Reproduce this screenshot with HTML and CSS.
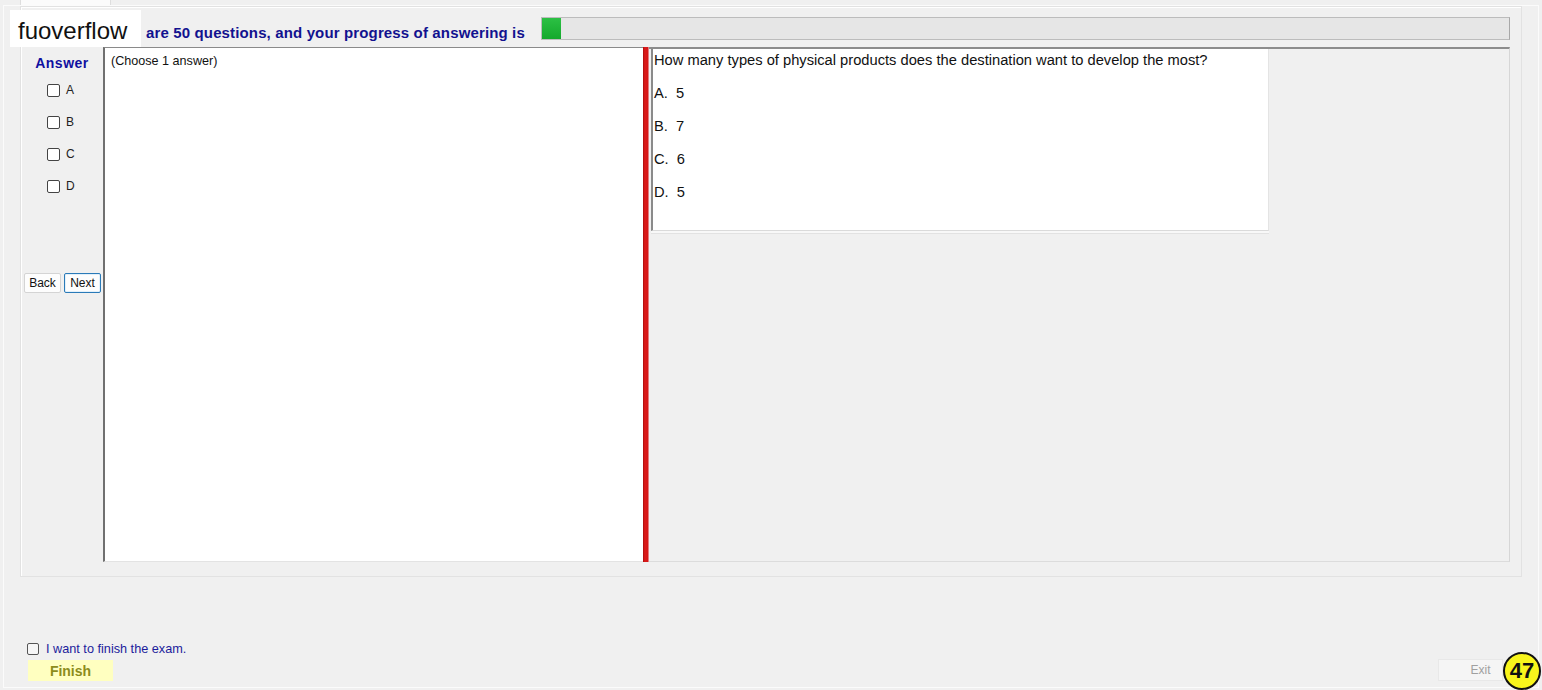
FILE: index.html
```html
<!DOCTYPE html>
<html lang="en">
<head>
  <meta charset="UTF-8" />
  <title>Exam</title>
  <link rel="stylesheet" href="styles.css">
</head>
<body>
  <div class="tabs"><div class="tab"></div></div>

  <div class="frame">
    <div class="group">
      <div class="head">
        <div class="head-text">are 50 questions, and your progress of answering is</div>
        <div class="progress"><div class="progress-fill" style="width:19px"></div></div>
      </div>

      <div class="content">
        <div class="left">
          <div class="answer-title">Answer</div>
          <label class="opt"><span class="box"></span>A</label>
          <label class="opt"><span class="box"></span>B</label>
          <label class="opt"><span class="box"></span>C</label>
          <label class="opt"><span class="box"></span>D</label>
          <div class="nav">
            <button class="btn">Back</button>
            <button class="btn btn-focus">Next</button>
          </div>
        </div>

        <div class="center">(Choose 1 answer)</div>

        <div class="splitter"></div>

        <div class="right">
          <div class="question">
            <p>How many types of physical products does the destination want to develop the most?</p>
            <p>A.&nbsp; 5</p>
            <p>B.&nbsp; 7</p>
            <p>C.&nbsp; 6</p>
            <p>D.&nbsp; 5</p>
          </div>
        </div>
      </div>
    </div>

    <div class="footer">
      <div class="finish-part">
        <label class="confirm"><span class="box"></span>I want to finish the exam.</label>
        <button class="finish">Finish</button>
      </div>
      <button class="exit">Exit</button>
    </div>
  </div>

  <!-- watermark and counter lie over the form -->
  <div class="brand">fuoverflow</div>
  <div class="badge">47</div>
</body>
</html>
```

FILE: styles.css
```css
* { box-sizing: border-box; }
body {
  margin: 0;
  width: 1542px;
  height: 690px;
  overflow: hidden;
  position: relative;
  background: #f0f0f0;
  font-family: 'Liberation Sans', Arial, sans-serif;
  color: #111;
}
.tabs { height: 5px; }
.tab {
  margin-left: 20px;
  width: 91px;
  height: 5px;
  background: #fbfbfb;
  border-left: 1px solid #dedede;
  border-right: 1px solid #dedede;
}
.frame {
  margin-left: 3px;
  width: 1536px;
  height: 683px;
  border: 1px solid #fbfbfb;
  padding: 0 16px;
  display: flex;
  flex-direction: column;
}
.group {
  height: 571px;
  border: 1px solid #e2e2e2;
  box-shadow: inset 1px 1px 0 #fff;
  padding: 0 11px 14px 0;
}
.head {
  height: 40px;
  display: flex;
  align-items: flex-start;
}
.head-text {
  margin-left: 125px;
  padding-top: 14px;
  line-height: 23px;
  font-size: 15px;
  letter-spacing: 0.14px;
  font-weight: bold;
  color: #12128f;
}
.progress {
  margin-left: auto;
  margin-top: 10px;
  width: 969px;
  height: 23px;
  background: #e6e6e6;
  border: 1px solid #bcbcbc;
  border-right-color: #a8a8a8;
}
.progress-fill {
  height: 100%;
  background: linear-gradient(#2cc044, #14a92c);
}
.content {
  display: flex;
  height: 515px;
}
.left {
  width: 82px;
  padding-top: 8px;
}
.answer-title {
  text-align: center;
  font-size: 14px;
  letter-spacing: 0.5px;
  font-weight: bold;
  line-height: 16px;
  color: #1010a0;
  margin-bottom: 3px;
}
.opt {
  display: flex;
  align-items: center;
  height: 32px;
  padding-left: 26px;
  font-size: 12px;
  color: #222;
}
.box {
  display: inline-block;
  width: 13px;
  height: 13px;
  border: 1px solid #444;
  border-radius: 2px;
  background: #fff;
  margin-right: 6px;
}
.nav {
  display: flex;
  gap: 3px;
  margin-top: 71px;
  padding-left: 3px;
}
.btn {
  width: 37px;
  height: 20px;
  padding: 0;
  font-family: inherit;
  font-size: 12px;
  color: #111;
  background: #fdfdfd;
  border: 1px solid #d4d4d4;
  border-radius: 2px;
}
.btn-focus {
  border-color: #2a7ab8;
  box-shadow: inset 0 0 0 1px #e2f0fa;
}
.center {
  width: 540px;
  background: #fff;
  border-top: 1px solid #8a8a8a;
  border-left: 2px solid #707070;
  border-bottom: 1px solid #e3e3e3;
  padding: 6px 0 0 6px;
  font-size: 12.6px;
}
.splitter {
  width: 6px;
  background: linear-gradient(to right, #a80c0c, #dc1a1a 30%, #d41616 80%, #f0c4cc);
}
.right {
  width: 861px;
  border-top: 2px solid #8c8c8c;
  border-right: 1px solid #d6d6d6;
  border-bottom: 1px solid #dcdcdc;
  padding-left: 2px;
}
.question {
  width: 618px;
  height: 182px;
  background: #fff;
  border-left: 2px solid #8a8a8a;
  border-right: 1px solid #e4e4e4;
  border-bottom: 1px solid #dadada;
  box-shadow: 0 2px 0 #f8f8f8, 0 3px 0 #e2e2e2;
  padding-left: 1px;
  font-size: 14.7px;
}
.question p {
  margin: 0 0 11px;
  line-height: 22px;
}
.footer {
  margin-top: 64px;
  display: flex;
  align-items: flex-end;
  justify-content: space-between;
  padding-right: 19px;
}
.finish-part {
  display: flex;
  flex-direction: column;
}
.confirm {
  display: flex;
  align-items: center;
  height: 15px;
  margin-left: 7px;
  font-size: 12.7px;
  color: #1c1c9c;
}
.confirm .box {
  width: 12px;
  height: 12px;
  margin-right: 7px;
  border-color: #555;
  background: #f6f6f6;
}
.finish {
  margin: 4px 0 0 8px;
  width: 85px;
  height: 21px;
  padding: 0;
  border: none;
  background: #ffffc0;
  font-family: inherit;
  font-size: 14px;
  font-weight: bold;
  color: #8c8c1c;
}
.exit {
  width: 65px;
  height: 22px;
  padding: 0 0 0 20px;
  background: #f5f5f5;
  border: 1px solid #e8e8e8;
  font-family: inherit;
  font-size: 12px;
  color: #a0a0a0;
}
.brand {
  position: absolute;
  left: 10px;
  top: 10px;
  width: 131px;
  height: 37px;
  background: #fff;
  padding-left: 8px;
  line-height: 41px;
  font-size: 24px;
  color: #111;
}
.badge {
  position: absolute;
  left: 1503px;
  top: 652px;
  width: 38px;
  height: 38px;
  border: 2px solid #111;
  border-radius: 50%;
  background: #f8f51c;
  text-align: center;
  line-height: 34px;
  font-size: 22px;
  font-weight: bold;
  color: #111;
}
```
